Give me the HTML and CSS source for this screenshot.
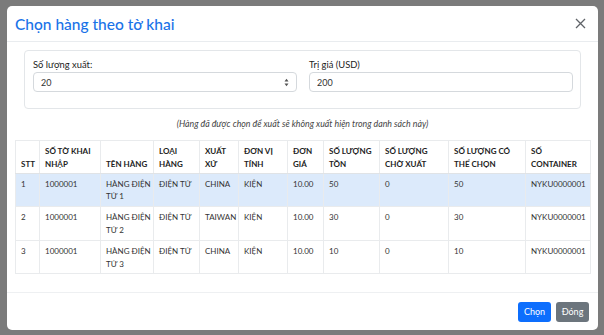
FILE: index.html
```html
<!DOCTYPE html>
<html lang="vi">
<head>
    <meta charset="UTF-8" />
    <title>Chọn hàng theo tờ khai</title>
    <link rel="stylesheet" href="styles.css">
</head>
<body>
    <div class="modal">
        <div class="modal-header">
            <h5 class="modal-title">Chọn hàng theo tờ khai</h5>
            <span class="btn-close">
                <svg width="11" height="11" viewBox="0 0 11 11"><path d="M1 1L10 10M10 1L1 10" stroke="#5f6368" stroke-width="1.3" fill="none"/></svg>
            </span>
        </div>
        <div class="modal-body">
            <div class="filter">
                <div class="field">
                    <label>Số lượng xuất:</label>
                    <div class="input-wrap">
                        <input type="text" value="20" />
                        <svg class="spin" width="5" height="9" viewBox="0 0 5 9"><path d="M0.5 3.5L2.5 0.8L4.5 3.5Z M0.5 5.5L2.5 8.2L4.5 5.5Z" fill="#555"/></svg>
                    </div>
                </div>
                <div class="field">
                    <label>Trị giá (USD)</label>
                    <div class="input-wrap">
                        <input type="text" value="200" />
                    </div>
                </div>
            </div>
            <p class="note">(Hàng đã được chọn để xuất sẽ không xuất hiện trong danh sách này)</p>
            <table class="grid">
                <colgroup>
                    <col style="width:24px"><col style="width:61px"><col style="width:53px"><col style="width:46px">
                    <col style="width:39px"><col style="width:49px"><col style="width:36px"><col style="width:56px">
                    <col style="width:69px"><col style="width:77px"><col style="width:65px">
                </colgroup>
                <thead>
                    <tr>
                        <th>STT</th>
                        <th>SỐ TỜ KHAI NHẬP</th>
                        <th>TÊN HÀNG</th>
                        <th>LOẠI HÀNG</th>
                        <th>XUẤT XỨ</th>
                        <th>ĐƠN VỊ TÍNH</th>
                        <th>ĐƠN GIÁ</th>
                        <th>SỐ LƯỢNG TỒN</th>
                        <th>SỐ LƯỢNG CHỜ XUẤT</th>
                        <th>SỐ LƯỢNG CÓ THỂ CHỌN</th>
                        <th>SỐ CONTAINER</th>
                    </tr>
                </thead>
                <tbody>
                    <tr class="active">
                        <td>1</td><td>1000001</td><td>HÀNG ĐIỆN TỬ 1</td><td>ĐIỆN TỬ</td><td>CHINA</td>
                        <td>KIỆN</td><td>10.00</td><td>50</td><td>0</td><td>50</td><td>NYKU0000001</td>
                    </tr>
                    <tr>
                        <td>2</td><td>1000001</td><td>HÀNG ĐIỆN TỬ 2</td><td>ĐIỆN TỬ</td><td>TAIWAN</td>
                        <td>KIỆN</td><td>10.00</td><td>30</td><td>0</td><td>30</td><td>NYKU0000001</td>
                    </tr>
                    <tr>
                        <td>3</td><td>1000001</td><td>HÀNG ĐIỆN TỬ 3</td><td>ĐIỆN TỬ</td><td>CHINA</td>
                        <td>KIỆN</td><td>10.00</td><td>10</td><td>0</td><td>10</td><td>NYKU0000001</td>
                    </tr>
                </tbody>
            </table>
        </div>
        <div class="modal-footer">
            <button class="btn btn-primary">Chọn</button>
            <button class="btn btn-secondary">Đóng</button>
        </div>
    </div>
</body>
</html>
```

FILE: styles.css
```css
* {
    margin: 0;
    padding: 0;
    box-sizing: border-box;
}
body {
    background-color: #7b7b7b;
    padding: 6px 6px 0 7px;
    font-family: "Lato", "Noto Sans", sans-serif;
    font-size: 9px;
    color: #333;
}
.modal {
    width: 591px;
    background-color: #fff;
    border-radius: 5px;
}
.modal-header {
    height: 36px;
    border-bottom: 1px solid #e9ecef;
    padding: 0 9px 0 8px;
    display: flex;
    align-items: center;
    justify-content: space-between;
}
.modal-title {
    font-size: 15.5px;
    font-weight: 500;
    color: #1a73e8;
}
.btn-close {
    display: flex;
    margin-right: 3px;
}
.modal-body {
    padding: 8px 8px 18px;
    border-bottom: 1px solid #eef0f2;
}
.filter {
    margin: 0 9px;
    height: 59px;
    border: 1px solid #e3e6e9;
    border-radius: 4px;
    padding: 8px 7px 0 8px;
    display: grid;
    grid-template-columns: 1fr 1fr;
    gap: 12px;
}
.field label {
    display: block;
    font-size: 9.4px;
    line-height: 12px;
    margin-bottom: 1px;
    color: #222;
}
.input-wrap {
    position: relative;
}
.input-wrap input {
    width: 100%;
    height: 20px;
    border: 1px solid #d5d9dd;
    border-radius: 4px;
    padding: 0 7px;
    font-family: inherit;
    font-size: 9px;
    color: #333;
}
.spin {
    position: absolute;
    right: 8px;
    top: 6px;
}
.note {
    text-align: center;
    font-style: italic;
    font-size: 8.8px;
    line-height: 12px;
    color: #444;
    margin: 9px 0 10px;
}
.grid {
    width: 575px;
    border-collapse: collapse;
    table-layout: fixed;
    border: 1px solid #e6e8ea;
    font-size: 8px;
}
.grid th,
.grid td {
    border: 1px solid #e9ebed;
    padding: 4px 2px 3px 5px;
    line-height: 12.8px;
    text-align: left;
    vertical-align: top;
}
.grid th {
    vertical-align: bottom;
    font-weight: 700;
    color: #222;
    border-bottom-color: #e0e3e6;
    padding-bottom: 2px;
}
.grid tr.active td {
    background-color: #dceafb;
}
.modal-footer {
    height: 37px;
    display: flex;
    justify-content: flex-end;
    align-items: center;
    gap: 5px;
    padding: 0 9px 0 0;
}
.btn {
    height: 20px;
    border: none;
    border-radius: 3px;
    padding: 0;
    font-family: inherit;
    font-size: 9px;
    color: #fff;
}
.btn-primary {
    background-color: #0d6efd;
    width: 33px;
}
.btn-secondary {
    background-color: #6c757d;
    width: 33px;
}
```
